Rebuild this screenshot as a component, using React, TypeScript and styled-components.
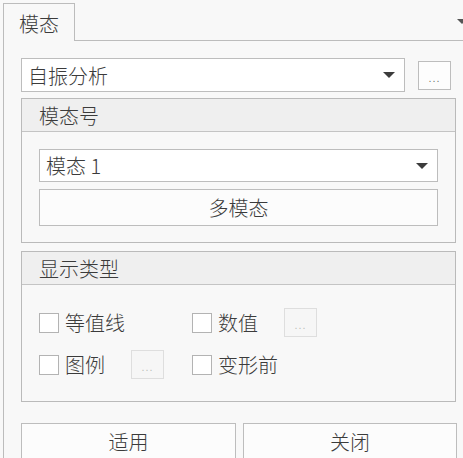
import React from 'react';
import styled, { createGlobalStyle } from 'styled-components';

const GlobalStyle = createGlobalStyle`
  html, body {
    margin: 0;
    padding: 0;
    background: #f8f8f8;
  }
  body {
    font-family: "Noto Sans CJK SC", "Noto Sans", sans-serif;
    font-weight: 300;
    color: #3b3b3b;
  }
`;

const Page = styled.div`
  width: 463px;
  height: 458px;
  overflow: hidden;
  padding: 3px 0 0 3px;
  box-sizing: border-box;
`;

const TabStrip = styled.div`
  display: flex;
  height: 38px;
`;

const Tab = styled.div`
  width: 72px;
  border: 1px solid #bcbcbc;
  border-bottom: none;
  box-sizing: border-box;
  font-size: 20px;
  line-height: 40px;
  padding-left: 15px;
  background: #f8f8f8;
`;

const TabFiller = styled.div`
  flex: 1;
  border-bottom: 1px solid #bcbcbc;
  display: flex;
  justify-content: flex-end;
  padding-top: 16px;
  box-sizing: border-box;
`;

const ScrollArrow = styled.span`
  width: 0;
  height: 0;
  border-left: 5px solid transparent;
  border-right: 5px solid transparent;
  border-top: 5px solid #555;
  margin-right: -4px;
`;

const Panel = styled.div`
  border-left: 1px solid #bcbcbc;
  padding: 17px 0 0 17px;
  height: 420px;
  box-sizing: border-box;
`;

const TopRow = styled.div`
  display: flex;
  align-items: center;
  gap: 13px;
`;

const Combo = styled.div<{ $width?: number; $height?: number }>`
  display: flex;
  align-items: center;
  justify-content: space-between;
  width: ${p => (p.$width ? `${p.$width}px` : '100%')};
  height: ${p => p.$height ?? 34}px;
  border: 1px solid #bdbdbd;
  background: #ffffff;
  box-sizing: border-box;
  padding: 0 9px 0 6px;
  font-size: 20px;
`;

const DownArrow = styled.span`
  width: 0;
  height: 0;
  border-left: 6px solid transparent;
  border-right: 6px solid transparent;
  border-top: 6px solid #3c3c3c;
`;

const DotsButton = styled.div<{ $disabled?: boolean }>`
  width: 33px;
  height: 29px;
  box-sizing: border-box;
  border: 1px solid ${p => (p.$disabled ? '#dedede' : '#bdbdbd')};
  background: ${p => (p.$disabled ? '#f6f6f6' : '#fdfdfd')};
  color: ${p => (p.$disabled ? '#b0b0b0' : '#555')};
  display: flex;
  align-items: flex-end;
  justify-content: center;
  padding-bottom: 6px;
  font-size: 12px;
  line-height: 1;
  letter-spacing: 1px;
`;

const Group = styled.div<{ $top: number; $height: number }>`
  width: 435px;
  height: ${p => p.$height}px;
  margin-top: ${p => p.$top}px;
  border: 1px solid #bababa;
  box-sizing: border-box;
`;

const GroupHeader = styled.div`
  height: 33px;
  background: #efefef;
  border-bottom: 1px solid #c4c4c4;
  box-sizing: border-box;
  font-size: 20px;
  line-height: 34px;
  padding-left: 17px;
`;

const ModeBody = styled.div`
  padding: 17px 17px 0 17px;
  display: flex;
  flex-direction: column;
  gap: 7px;
`;

const WideButton = styled.div`
  height: 37px;
  border: 1px solid #bdbdbd;
  background: #fcfcfc;
  box-sizing: border-box;
  display: flex;
  align-items: center;
  justify-content: center;
  font-size: 20px;
`;

const DisplayBody = styled.div`
  padding: 23px 17px 0 17px;
  display: grid;
  grid-template-columns: 153px 1fr;
  row-gap: 13px;
`;

const CheckItem = styled.label`
  display: flex;
  align-items: center;
  height: 29px;
  font-size: 20px;
`;

const Box = styled.span`
  width: 20px;
  height: 20px;
  border: 1px solid #b3b3b3;
  background: #ffffff;
  box-sizing: border-box;
  margin-right: 6px;
`;

const ItemDots = styled(DotsButton)`
  margin-left: 26px;
`;

const Footer = styled.div`
  display: flex;
  gap: 7px;
  margin-top: 21px;
`;

const FooterButton = styled(WideButton)<{ $width: number }>`
  width: ${p => p.$width}px;
  height: 40px;
  padding-bottom: 4px;
`;

export default function App() {
  return (
    <>
      <GlobalStyle />
      <Page>
        <TabStrip>
          <Tab>模态</Tab>
          <TabFiller>
            <ScrollArrow />
          </TabFiller>
        </TabStrip>
        <Panel>
          <TopRow>
            <Combo $width={384}>
              <span>自振分析</span>
              <DownArrow />
            </Combo>
            <DotsButton>...</DotsButton>
          </TopRow>

          <Group $top={6} $height={145}>
            <GroupHeader>模态号</GroupHeader>
            <ModeBody>
              <Combo $height={33}>
                <span>模态 1</span>
                <DownArrow />
              </Combo>
              <WideButton>多模态</WideButton>
            </ModeBody>
          </Group>

          <Group $top={8} $height={151}>
            <GroupHeader>显示类型</GroupHeader>
            <DisplayBody>
              <CheckItem>
                <Box />
                等值线
              </CheckItem>
              <CheckItem>
                <Box />
                数值
                <ItemDots $disabled>...</ItemDots>
              </CheckItem>
              <CheckItem>
                <Box />
                图例
                <ItemDots $disabled>...</ItemDots>
              </CheckItem>
              <CheckItem>
                <Box />
                变形前
              </CheckItem>
            </DisplayBody>
          </Group>

          <Footer>
            <FooterButton $width={215}>适用</FooterButton>
            <FooterButton $width={214}>关闭</FooterButton>
          </Footer>
        </Panel>
      </Page>
    </>
  );
}
